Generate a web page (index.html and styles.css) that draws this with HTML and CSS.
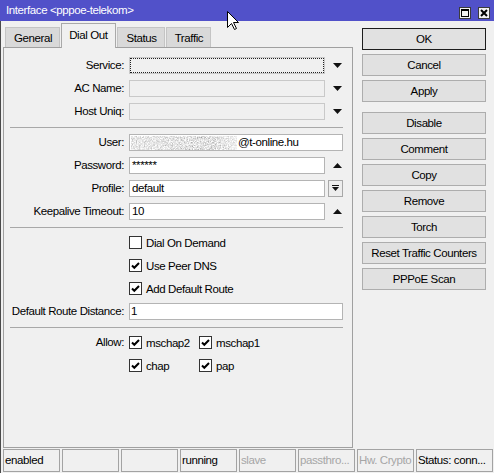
FILE: index.html
```html
<!DOCTYPE html>
<html>
<head>
<meta charset="utf-8">
<link rel="stylesheet" href="styles.css">
</head>
<body>
<div class="window">
  <div class="titlebar">
    <span class="title">Interface &lt;pppoe-telekom&gt;</span>
    <div class="tb-btns">
      <svg class="tb-btn" width="12" height="12" viewBox="0 0 12 12"><rect x="0.5" y="0.5" width="11" height="11" fill="#f2f2f2" stroke="#3c3c3c"/><rect x="2.5" y="2.5" width="7" height="7" fill="none" stroke="#000"/><rect x="2" y="2" width="8" height="2" fill="#000"/></svg>
      <svg class="tb-btn" width="12" height="12" viewBox="0 0 12 12"><rect x="0.5" y="0.5" width="11" height="11" fill="#f2f2f2" stroke="#3c3c3c"/><path d="M3 3 L9 9 M9 3 L3 9" stroke="#000" stroke-width="2"/></svg>
    </div>
    <svg class="cursor" width="13" height="20" viewBox="0 0 13 20"><path d="M0.5 0.5 L0.5 16.5 L4.5 12.5 L7.5 18.5 L9.5 17.5 L6.5 11.5 L11.5 11.5 Z" fill="#fff" stroke="#000" stroke-width="1"/></svg>
  </div>
  <div class="content">
    <div class="main">
      <div class="left">
        <div class="tabs">
          <div class="tab">General</div>
          <div class="tab active">Dial Out</div>
          <div class="tab">Status</div>
          <div class="tab">Traffic</div>
        </div>
        <div class="panel">
          <div class="form">
            <div class="row">
              <span class="label">Service:</span>
              <div class="ctl"><span class="field ro focus"></span><svg class="arrow" width="9" height="5" viewBox="0 0 9 5"><path d="M0 0 H9 L4.5 5 Z" fill="#111"/></svg></div>
            </div>
            <div class="row">
              <span class="label">AC Name:</span>
              <div class="ctl"><span class="field ro"></span><svg class="arrow" width="9" height="5" viewBox="0 0 9 5"><path d="M0 0 H9 L4.5 5 Z" fill="#111"/></svg></div>
            </div>
            <div class="row">
              <span class="label">Host Uniq:</span>
              <div class="ctl"><span class="field ro"></span><svg class="arrow" width="9" height="5" viewBox="0 0 9 5"><path d="M0 0 H9 L4.5 5 Z" fill="#111"/></svg></div>
            </div>
            <div class="sep"></div>
            <div class="row">
              <span class="label">User:</span>
              <div class="ctl"><span class="field wide"><svg class="blur" width="106" height="14" viewBox="0 0 106 14"><defs><filter id="noise" x="0" y="0" width="100%" height="100%"><feTurbulence type="fractalNoise" baseFrequency="0.75" numOctaves="3" seed="7"/><feColorMatrix type="saturate" values="0"/><feComponentTransfer><feFuncR type="linear" slope="1.6" intercept="-0.05"/><feFuncG type="linear" slope="1.6" intercept="-0.05"/><feFuncB type="linear" slope="1.6" intercept="-0.05"/><feFuncA type="linear" slope="0" intercept="1"/></feComponentTransfer></filter><linearGradient id="fade" x1="0" x2="1" y1="0" y2="0"><stop offset="0" stop-color="#fff" stop-opacity="0.25"/><stop offset="0.8" stop-color="#fff" stop-opacity="0"/><stop offset="1" stop-color="#fff" stop-opacity="0.5"/></linearGradient></defs><rect width="106" height="14" filter="url(#noise)"/><rect width="106" height="14" fill="url(#fade)"/></svg>@t-online.hu</span></div>
            </div>
            <div class="row">
              <span class="label">Password:</span>
              <div class="ctl"><span class="field">******</span><svg class="arrow" width="9" height="5" viewBox="0 0 9 5"><path d="M0 5 H9 L4.5 0 Z" fill="#111"/></svg></div>
            </div>
            <div class="row">
              <span class="label">Profile:</span>
              <div class="ctl"><span class="field">default</span><span class="dd-btn"><svg width="7" height="7" viewBox="0 0 7 7"><rect x="0" y="0" width="7" height="1" fill="#111"/><path d="M0 2 H7 L3.5 6 Z" fill="#111"/></svg></span></div>
            </div>
            <div class="row">
              <span class="label">Keepalive Timeout:</span>
              <div class="ctl"><span class="field">10</span><svg class="arrow" width="9" height="5" viewBox="0 0 9 5"><path d="M0 5 H9 L4.5 0 Z" fill="#111"/></svg></div>
            </div>
            <div class="sep"></div>
            <div class="row">
              <span class="label"></span>
              <div class="ctl"><span class="check"><span class="box"></span>Dial On Demand</span></div>
            </div>
            <div class="row">
              <span class="label"></span>
              <div class="ctl"><span class="check"><span class="box on"><svg width="11" height="11" viewBox="0 0 11 11"><path d="M2 5.5 L4.3 7.8 L9 3" fill="none" stroke="#000" stroke-width="2"/></svg></span>Use Peer DNS</span></div>
            </div>
            <div class="row">
              <span class="label"></span>
              <div class="ctl"><span class="check"><span class="box on"><svg width="11" height="11" viewBox="0 0 11 11"><path d="M2 5.5 L4.3 7.8 L9 3" fill="none" stroke="#000" stroke-width="2"/></svg></span>Add Default Route</span></div>
            </div>
            <div class="row">
              <span class="label">Default Route Distance:</span>
              <div class="ctl"><span class="field wide">1</span></div>
            </div>
            <div class="sep"></div>
            <div class="row">
              <span class="label">Allow:</span>
              <div class="ctl">
                <span class="check opt"><span class="box on"><svg width="11" height="11" viewBox="0 0 11 11"><path d="M2 5.5 L4.3 7.8 L9 3" fill="none" stroke="#000" stroke-width="2"/></svg></span>mschap2</span>
                <span class="check"><span class="box on"><svg width="11" height="11" viewBox="0 0 11 11"><path d="M2 5.5 L4.3 7.8 L9 3" fill="none" stroke="#000" stroke-width="2"/></svg></span>mschap1</span>
              </div>
            </div>
            <div class="row">
              <span class="label"></span>
              <div class="ctl">
                <span class="check opt"><span class="box on"><svg width="11" height="11" viewBox="0 0 11 11"><path d="M2 5.5 L4.3 7.8 L9 3" fill="none" stroke="#000" stroke-width="2"/></svg></span>chap</span>
                <span class="check"><span class="box on"><svg width="11" height="11" viewBox="0 0 11 11"><path d="M2 5.5 L4.3 7.8 L9 3" fill="none" stroke="#000" stroke-width="2"/></svg></span>pap</span>
              </div>
            </div>
          </div>
        </div>
      </div>
      <div class="buttons">
        <div class="btn default">OK</div>
        <div class="btn">Cancel</div>
        <div class="btn">Apply</div>
        <div class="btn group">Disable</div>
        <div class="btn">Comment</div>
        <div class="btn">Copy</div>
        <div class="btn">Remove</div>
        <div class="btn">Torch</div>
        <div class="btn">Reset Traffic Counters</div>
        <div class="btn">PPPoE Scan</div>
      </div>
    </div>
    <div class="statusbar">
      <div class="cell">enabled</div>
      <div class="cell"></div>
      <div class="cell"></div>
      <div class="cell">running</div>
      <div class="cell dim">slave</div>
      <div class="cell dim">passthro...</div>
      <div class="cell dim">Hw. Crypto</div>
      <div class="cell last">Status: conn...</div>
    </div>
  </div>
</div>
</body>
</html>
```

FILE: styles.css
```css
* { box-sizing: border-box; }
html, body { margin: 0; padding: 0; }
body {
  width: 494px;
  height: 473px;
  background: #f0f0f0;
  font-family: "Liberation Sans", Arial, sans-serif;
  font-size: 11.5px;
  letter-spacing: -0.4px;
  color: #000;
  overflow: hidden;
}
.window { width: 494px; height: 473px; display: flex; flex-direction: column; }

.titlebar {
  position: relative;
  height: 21px;
  flex: none;
  background: #5151c9;
  display: flex;
  align-items: flex-start;
  padding-left: 6px;
}
.title { color: #fff; line-height: 21px; }
.tb-btns { margin-left: auto; margin-top: 7px; margin-right: 4px; display: flex; gap: 7px; }
.tb-btn { display: block; }
.cursor { position: absolute; left: 227px; top: 11px; }

.content { flex: 1; display: flex; flex-direction: column; border-left: 1px solid #4a4a4a; }
.main { display: flex; padding-left: 2px; }
.left { width: 350px; display: flex; flex-direction: column; }

.tabs { height: 26px; display: flex; align-items: flex-end; padding-left: 2px; gap: 1px; }
.tab {
  height: 20px;
  padding: 0 7px 0 8px;
  line-height: 20px;
  background: #d9d9d9;
  border: 1px solid #c4c4c4;
  border-bottom: none;
}
.tab.active {
  position: relative;
  z-index: 2;
  height: 25px;
  margin-bottom: -1px;
  line-height: 23px;
  background: #f0f0f0;
  border-color: #a9a9a9;
  padding: 0 8px 0 7px;
}

.panel {
  height: 401px;
  border: 1px solid #a0a0a0;
  background: #f0f0f0;
}
.form { display: flex; flex-direction: column; gap: 6px; padding-top: 9px; }
.row {
  display: grid;
  grid-template-columns: 120px 214px;
  column-gap: 5px;
  height: 17px;
  align-items: center;
}
.label { text-align: right; white-space: nowrap; line-height: 17px; }
.ctl { display: flex; align-items: center; height: 17px; }
.sep { height: 1px; margin: 1px 9px 0 6px; background: #a8a8a8; }

.field {
  display: flex;
  align-items: center;
  width: 196px;
  height: 17px;
  padding: 0 2px;
  background: #fff;
  border: 1px solid #b4b4b4;
  white-space: nowrap;
  overflow: hidden;
  line-height: 15px;
}
.field.wide { width: 214px; padding-left: 1px; }
.field.ro { background: #f0f0f0; border-color: #c9c9c9; }
.field.focus { outline: 1px dotted #222; outline-offset: -2px; }
.blur { display: block; flex: none; margin-right: 1px; }
.arrow { display: block; margin-left: 8px; flex: none; }
.dd-btn {
  width: 15px;
  height: 17px;
  margin-left: 3px;
  border: 1px solid #a8a8a8;
  background: #ededed;
  display: flex;
  align-items: center;
  justify-content: center;
}
.dd-btn svg { display: block; }

.check { display: flex; align-items: center; white-space: nowrap; }
.check.opt { width: 70px; }
.box {
  width: 13px;
  height: 13px;
  flex: none;
  margin-right: 4px;
  background: #fff;
  border: 1px solid #333;
  display: flex;
  align-items: center;
  justify-content: center;
}
.box svg { display: block; }

.buttons { width: 124px; margin-left: 9px; padding-top: 7px; display: flex; flex-direction: column; gap: 4px; }
.btn {
  height: 22px;
  line-height: 20px;
  text-align: center;
  background: #e1e1e1;
  border: 1px solid #adadad;
  white-space: nowrap;
}
.btn.default { border-color: #1c1c1c; }
.btn.group { margin-top: 6px; }

.statusbar { margin-top: 1px; height: 23px; display: flex; gap: 2px; padding-left: 2px; }
.cell {
  width: 57px;
  height: 23px;
  border: 1px solid #a3a3a3;
  padding-left: 1px;
  line-height: 21px;
  white-space: nowrap;
  overflow: hidden;
}
.cell.dim { color: #a6a6a6; }
.cell.last { width: 77px; }
```
